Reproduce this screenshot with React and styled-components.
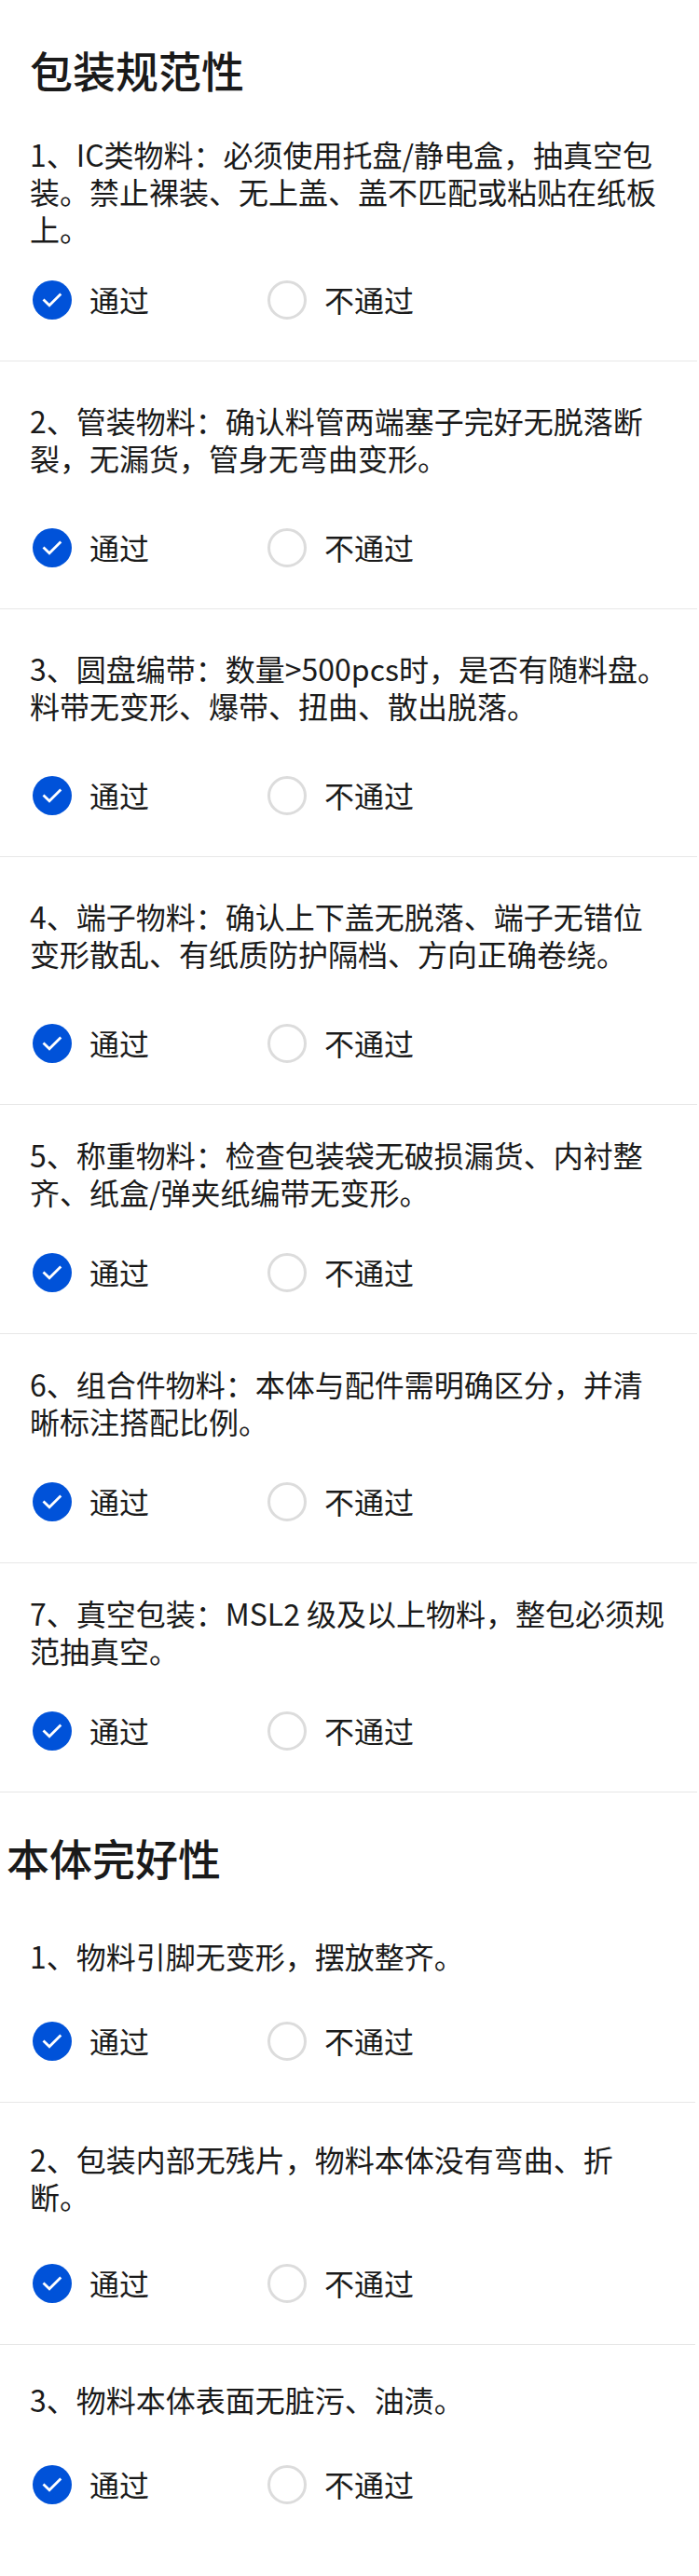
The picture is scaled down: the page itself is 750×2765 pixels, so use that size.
import React, { useState } from 'react';
import styled, { createGlobalStyle } from 'styled-components';

const sections = [
    {name:"包装规范性",top:44,bottom:9,left:32,width:748,items:[
        {text:"1、IC类物料：必须使用托盘/静电盒，抽真空包装。禁止裸装、无上盖、盖不匹配或粘贴在纸板上。",top:32,gap:36},
        {text:"2、管装物料：确认料管两端塞子完好无脱落断裂，无漏货，管身无弯曲变形。",top:43,gap:56},
        {text:"3、圆盘编带：数量>500pcs时，是否有随料盘。料带无变形、爆带、扭曲、散出脱落。",top:43,gap:56},
        {text:"4、端子物料：确认上下盖无脱落、端子无错位变形散乱、有纸质防护隔档、方向正确卷绕。",top:43,gap:56},
        {text:"5、称重物料：检查包装袋无破损漏货、内衬整齐、纸盒/弹夹纸编带无变形。",top:33,gap:46},
        {text:"6、组合件物料：本体与配件需明确区分，并清晰标注搭配比例。",top:33,gap:46},
        {text:"7、真空包装：MSL2 级及以上物料，整包必须规范抽真空。",top:33,gap:46}
    ]},
    {name:"本体完好性",top:39,bottom:23,left:7,width:746,items:[
        {text:"1、物料引脚无变形，摆放整齐。",top:33,gap:51},
        {text:"2、包装内部无残片，物料本体没有弯曲、折断。",top:40,gap:53},
        {text:"3、物料本体表面无脏污、油渍。",top:38,gap:51}
    ]}
];

const options = ["通过","不通过"];

function CheckItem({ item }) {
    const [value,setValue] = useState("通过");
    return (
        <Item $top={item.top}>
            <Question>{item.text}</Question>
            <Options $gap={item.gap}>
                {options.map((name)=>(
                    <Option key={name} onClick={()=>setValue(name)}>
                        <Radio $checked={value === name}>
                            {value === name && <svg width="42" height="42" viewBox="0 0 42 42" fill="none">
                                <path d="M11.5 20.5L18 26.8L30.3 14.6" stroke="white" strokeWidth="2.8" />
                            </svg>}
                        </Radio>
                        <Label>{name}</Label>
                    </Option>
                ))}
            </Options>
        </Item>
    )
}

function App() {
    return (
        <Page>
            <GlobalStyle />
            {sections.map((section)=>(<Section key={section.name} $width={section.width}>
                <Title $top={section.top} $bottom={section.bottom} $left={section.left}>{section.name}</Title>
                {section.items.map((item,index)=>(
                    <CheckItem key={index} item={item} />
                ))}
            </Section>))}
        </Page>
    )
}

const GlobalStyle = createGlobalStyle`
    body {
        margin: 0;
        background-color: #ffffff;
    }
`;

const Page = styled.main`
    width: 750px;
    height: 2765px;
    overflow: hidden;
    background-color: #ffffff;
    color: #1a1a1a;
    font-family: "Noto Sans CJK SC", sans-serif;
`;

const Section = styled.section`
    width: ${(props) => props.$width}px;
`;

const Title = styled.h2`
    margin: 0;
    padding: ${(props) => props.$top}px 0 ${(props) => props.$bottom}px ${(props) => props.$left}px;
    font-size: 46px;
    font-weight: 500;
    line-height: 60px;
`;

const Item = styled.div`
    padding-top: ${(props) => props.$top}px;
    padding-bottom: 44px;
    border-bottom: 1px solid #e7e7e7;

    section:last-child > &:last-child {
        border-bottom: none;
    }
`;

const Question = styled.p`
    margin: 0;
    padding: 0 28px 0 32px;
    font-size: 32px;
    line-height: 40px;
`;

const Options = styled.div`
    display: flex;
    margin-top: ${(props) => props.$gap}px;
    padding-left: 35px;
`;

const Option = styled.div`
    display: flex;
    align-items: center;
    width: 252px;
    height: 42px;
    cursor: pointer;
`;

const Radio = styled.span`
    display: block;
    box-sizing: border-box;
    flex: none;
    width: 42px;
    height: 42px;
    border-radius: 50%;
    border: ${(props) => props.$checked ? "none" : "3px solid #dcdcdc"};
    background-color: ${(props) => props.$checked ? "#0052d9" : "transparent"};

    svg {
        display: block;
    }
`;

const Label = styled.span`
    margin-left: 19px;
    padding-bottom: 2px;
    font-size: 32px;
    line-height: 40px;
    white-space: nowrap;
`;

export default App
